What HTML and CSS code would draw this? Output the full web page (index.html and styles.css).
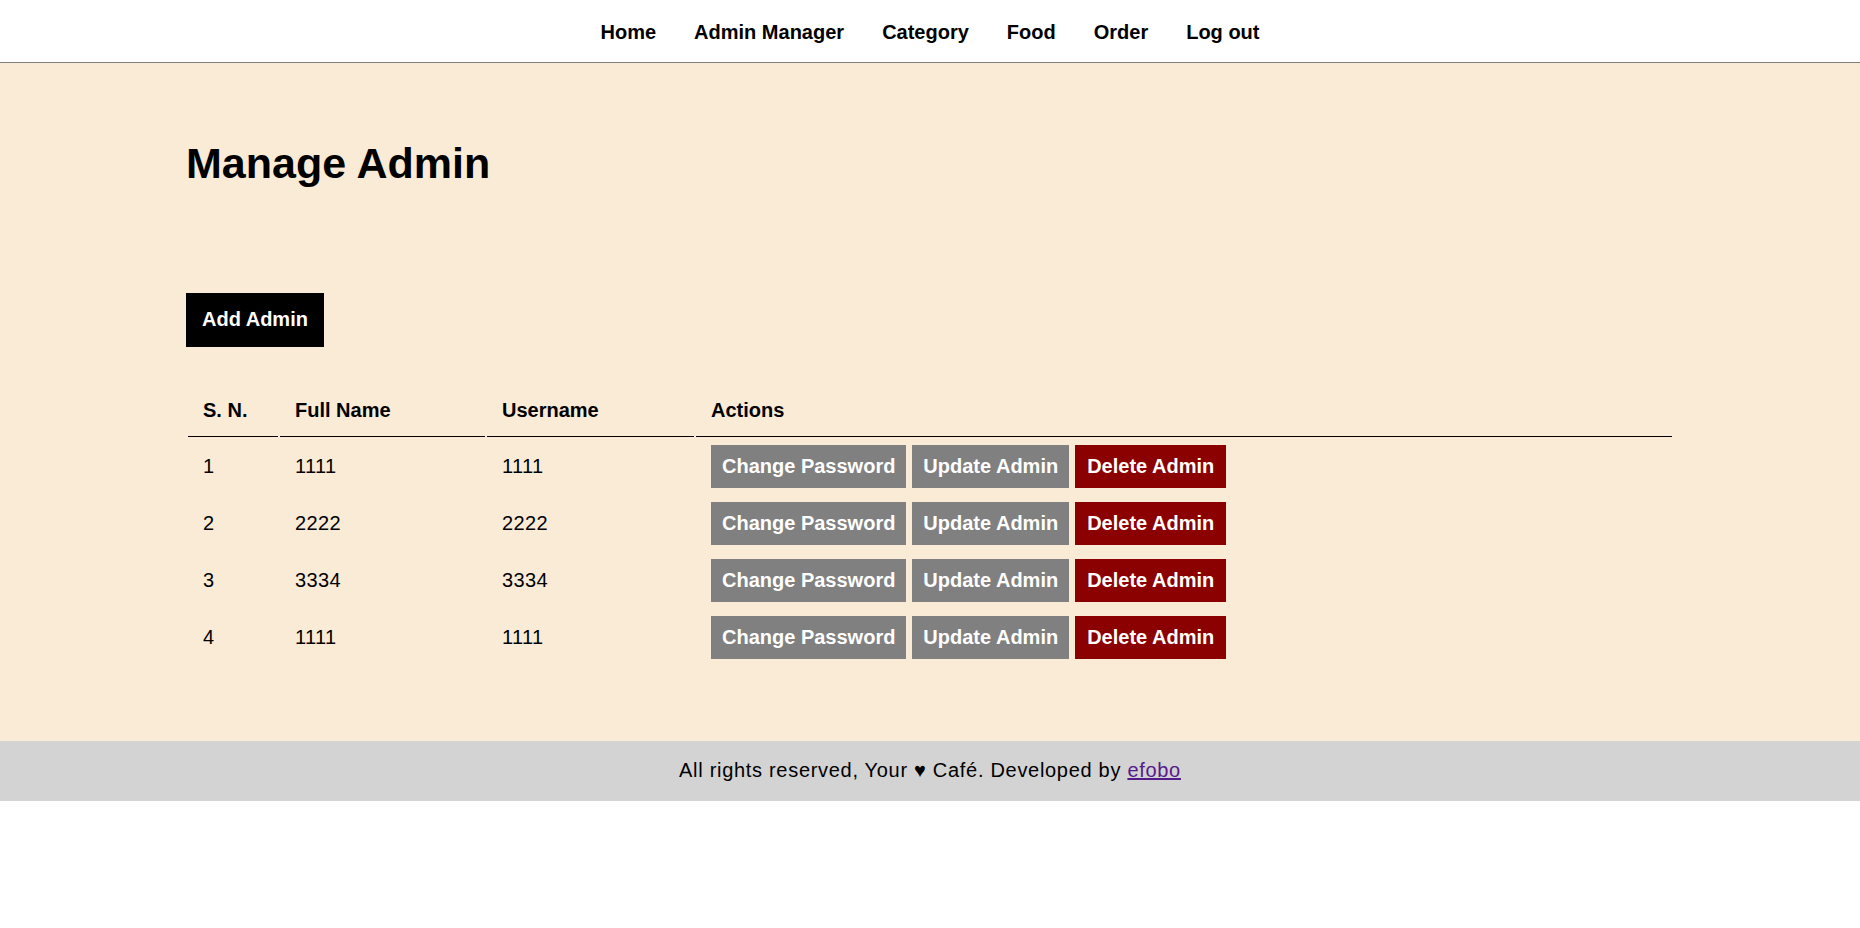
FILE: index.html
```html
<!DOCTYPE html>
<html lang="en">
<head>
<meta charset="utf-8">
<title>Manage Admin</title>
<link rel="stylesheet" href="styles.css">
</head>
<body>
<header class="menu">
  <nav class="menu-links">
    <a href="#">Home</a>
    <a href="#">Admin Manager</a>
    <a href="#">Category</a>
    <a href="#">Food</a>
    <a href="#">Order</a>
    <a href="#">Log out</a>
  </nav>
</header>
<main class="main-content">
  <div class="wrapper">
    <h1 class="page-title">Manage Admin</h1>
    <a href="#" class="btn-primary">Add Admin</a>
    <table class="tbl-full">
      <thead>
        <tr>
          <th class="col-sn">S. N.</th>
          <th class="col-name">Full Name</th>
          <th class="col-user">Username</th>
          <th class="col-actions">Actions</th>
        </tr>
      </thead>
      <tbody>
        <tr>
          <td>1</td><td>1111</td><td>1111</td>
          <td><a href="#" class="btn-secondary">Change Password</a> <a href="#" class="btn-secondary">Update Admin</a> <a href="#" class="btn-danger">Delete Admin</a></td>
        </tr>
        <tr>
          <td>2</td><td>2222</td><td>2222</td>
          <td><a href="#" class="btn-secondary">Change Password</a> <a href="#" class="btn-secondary">Update Admin</a> <a href="#" class="btn-danger">Delete Admin</a></td>
        </tr>
        <tr>
          <td>3</td><td>3334</td><td>3334</td>
          <td><a href="#" class="btn-secondary">Change Password</a> <a href="#" class="btn-secondary">Update Admin</a> <a href="#" class="btn-danger">Delete Admin</a></td>
        </tr>
        <tr>
          <td>4</td><td>1111</td><td>1111</td>
          <td><a href="#" class="btn-secondary">Change Password</a> <a href="#" class="btn-secondary">Update Admin</a> <a href="#" class="btn-danger">Delete Admin</a></td>
        </tr>
      </tbody>
    </table>
  </div>
</main>
<footer class="footer">
  <p class="footer-text">All rights reserved, Your ♥ Café. Developed by <a href="#" class="footer-link">efobo</a></p>
</footer>
</body>
</html>
```
FILE: styles.css
```css
* {
  box-sizing: border-box;
}
html, body {
  margin: 0;
  padding: 0;
  background: #ffffff;
}
body {
  font-family: "Liberation Sans", Arial, sans-serif;
  font-size: 20px;
  line-height: 23px;
  color: #000;
}
.menu {
  background: #fff;
  border-bottom: 1px solid #808080;
  padding: 21px 0 18px;
}
.menu-links {
  display: flex;
  justify-content: center;
  gap: 38px;
}
.menu-links a {
  color: #000;
  text-decoration: none;
  font-weight: bold;
}
.main-content {
  background: #faebd7;
  padding: 76px 0 74px;
}
.wrapper {
  width: 80%;
  margin: 0 auto;
}
.page-title {
  margin: 0;
  font-size: 43px;
  line-height: 49px;
  font-weight: bold;
}
.btn-primary {
  display: inline-block;
  margin-top: 105px;
  background: #000;
  color: #fff;
  text-decoration: none;
  font-weight: bold;
  padding: 15px 16px 16px;
}
.tbl-full {
  width: 100%;
  margin-top: 36px;
  border-spacing: 2px;
  table-layout: fixed;
}
.tbl-full th {
  text-align: left;
  font-weight: bold;
  padding: 14px 15px;
  border-bottom: 1px solid #000;
}
.tbl-full td {
  padding: 6px 15px;
  height: 55px;
  letter-spacing: 0.4px;
}
.col-sn { width: 90px; }
.col-name { width: 205px; }
.col-user { width: 207px; }
.btn-secondary,
.btn-danger {
  display: inline-block;
  padding: 10px 11px;
  color: #fff;
  text-decoration: none;
  font-weight: bold;
  letter-spacing: 0;
}
.btn-secondary {
  background: #808080;
}
.btn-danger {
  background: #8b0000;
  padding: 10px 12px;
}
.footer {
  background: #d3d3d3;
  padding: 18px 0 19px;
}
.footer-text {
  margin: 0;
  text-align: center;
  letter-spacing: 0.7px;
}
.footer-link {
  color: #551a8b;
}
```
